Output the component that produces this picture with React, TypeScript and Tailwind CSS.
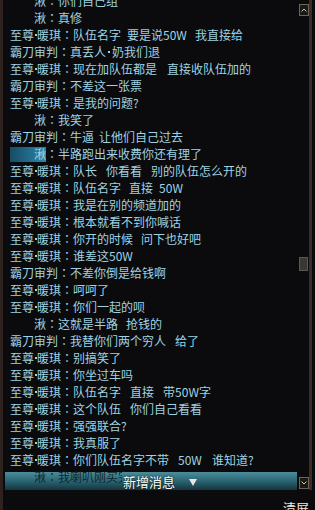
import React from "react";

type Seg = string | number;
type Row = { n: "Q" | "Z" | "B"; segs: Seg[]; hl?: boolean };

const DOT = -1;

const rows: Row[] = [
  { n: "Q", segs: ["你们自己组"] },
  { n: "Q", segs: ["真修"] },
  { n: "Z", segs: ["队伍名字", 6, "要是说50W", 8, "我直接给"] },
  { n: "B", segs: ["真丢人", DOT, "奶我们退"] },
  { n: "Z", segs: ["现在加队伍都是", 10, "直接收队伍加的"] },
  { n: "B", segs: ["不差这一张票"] },
  { n: "Z", segs: ["是我的问题?"] },
  { n: "Q", segs: ["我笑了"] },
  { n: "B", segs: ["牛逼", 5, "让他们自己过去"] },
  { n: "Q", segs: ["半路跑出来收费你还有理了"], hl: true },
  { n: "Z", segs: ["队长", 9, "你看看", 9, "别的队伍怎么开的"] },
  { n: "Z", segs: ["队伍名字", 8, "直接", 6, "50W"] },
  { n: "Z", segs: ["我是在别的频道加的"] },
  { n: "Z", segs: ["根本就看不到你喊话"] },
  { n: "Z", segs: ["你开的时候", 8, "问下也好吧"] },
  { n: "Z", segs: ["谁差这50W"] },
  { n: "B", segs: ["不差你倒是给钱啊"] },
  { n: "Z", segs: ["呵呵了"] },
  { n: "Z", segs: ["你们一起的呗"] },
  { n: "Q", segs: ["这就是半路", 8, "抢钱的"] },
  { n: "B", segs: ["我替你们两个穷人", 9, "给了"] },
  { n: "Z", segs: ["别搞笑了"] },
  { n: "Z", segs: ["你坐过车吗"] },
  { n: "Z", segs: ["队伍名字", 9, "直接", 9, "带50W字"] },
  { n: "Z", segs: ["这个队伍", 9, "你们自己看看"] },
  { n: "Z", segs: ["强强联合?"] },
  { n: "Z", segs: ["我真服了"] },
  { n: "Z", segs: ["你们队伍名字不带", 9, "50W", 10, "谁知道?"] },
];

const gapClass: Record<number, string> = {
  5: "w-[5px]",
  6: "w-[6px]",
  8: "w-[8px]",
  9: "w-[9px]",
  10: "w-[10px]",
};

function Dot({ w }: { w: "n" | "t" }) {
  return (
    <span
      className={
        (w === "n" ? "w-[3px]" : "w-[6px]") +
        " flex items-center justify-center self-stretch shrink-0"
      }
    >
      <span className="block w-[2px] h-[2px] bg-current" />
    </span>
  );
}

function Name({ n, hl }: { n: Row["n"]; hl?: boolean }) {
  if (n === "Z")
    return (
      <span className="flex shrink-0 h-[17px]">
        <span>至尊</span>
        <Dot w="n" />
        <span>暖琪</span>
      </span>
    );
  if (n === "B") return <span className="shrink-0">霸刀审判</span>;
  return (
    <span
      className={
        "shrink-0 w-[36px] text-right h-[17px] " +
        (hl
          ? "bg-linear-to-r from-[#174c66] to-[#2b88ad] bg-[length:100%_15px] bg-bottom bg-no-repeat"
          : "")
      }
    >
      湫
    </span>
  );
}

function Colon() {
  return (
    <span className="shrink-0 w-[12px] text-center font-['Noto_Sans_CJK_TC',sans-serif]">
      ：
    </span>
  );
}

function Segs({ segs }: { segs: Seg[] }) {
  return (
    <>
      {segs.map((s, i) =>
        typeof s === "string" ? (
          <span key={i} className="shrink-0">
            {s}
          </span>
        ) : s === DOT ? (
          <Dot key={i} w="t" />
        ) : (
          <span key={i} className={gapClass[s] + " shrink-0"} />
        )
      )}
    </>
  );
}

function ChatRow({ r, first }: { r: Row; first?: boolean }) {
  return (
    <div
      className={
        "flex items-center h-[17px] leading-[17px] whitespace-nowrap shrink-0" +
        (first ? " -mt-[8px]" : "")
      }
    >
      <Name n={r.n} hl={r.hl} />
      <Colon />
      <Segs segs={r.segs} />
    </div>
  );
}

function ArrowBtn({ up }: { up?: boolean }) {
  return (
    <div className="w-[10px] h-[12px] border border-[#6d6558] bg-[#1b1916] flex items-center justify-center shrink-0">
      <svg width="6" height="4" viewBox="0 0 6 4">
        <polyline
          points={up ? "0.5,3.5 3,1 5.5,3.5" : "0.5,0.5 3,3 5.5,0.5"}
          stroke="#cbc2b2"
          strokeWidth="1"
          fill="none"
        />
      </svg>
    </div>
  );
}

export default function App() {
  return (
    <div className="w-[315px] h-[510px] bg-[#0b0b0d] flex flex-col overflow-hidden text-[12px] text-[#9fd3e3] font-['Noto_Sans_CJK_SC',sans-serif]">
      <div className="flex h-[490px] shrink-0">
        <div className="w-[3px] bg-[#2d221d] shrink-0" />
        <div className="flex-1 flex flex-col overflow-hidden pl-[7px]">
          {rows.map((r, i) => (
            <ChatRow key={i} r={r} first={i === 0} />
          ))}
          <div className="relative -ml-[5px] pl-[5px] mt-[4px] h-[18px] shrink-0 flex items-start leading-[9px] whitespace-nowrap text-[#0d2632] bg-linear-to-b from-[#4c8d9b] via-[#2a6573] to-[#15363e]">
            <Name n="Q" />
            <Colon />
            <Segs segs={["我喇叭刚买完"]} />
            <div className="absolute left-[117px] top-0 h-[18px] pr-[40px] pl-[1px] pt-[2px] flex items-center gap-[14px] bg-linear-to-b from-[#4c8d9b] via-[#2a6573] to-[#15363e] text-white text-[13px] leading-[14px] [text-shadow:0_0_2px_#000]">
              <span>新增消息</span>
              <svg width="8" height="7" viewBox="0 0 8 7">
                <polygon points="0,0 8,0 4,7" fill="#e6e6e6" />
              </svg>
            </div>
          </div>
        </div>
        <div className="w-[12px] shrink-0 flex flex-col items-end pt-[4px] pb-[1px]">
          <ArrowBtn up />
          <div className="mt-[241px] w-[9px] h-[14px] mr-[1px] border border-[#5d5950] bg-[#3a3834] shrink-0" />
          <div className="flex-1" />
          <ArrowBtn />
        </div>
        <div className="w-[3px] bg-[#3c2e26] shrink-0" />
        <div className="w-[3px] shrink-0" />
      </div>
      <div className="flex h-[20px] shrink-0">
        <div className="w-[3px] bg-[#2d221d] shrink-0" />
        <div className="flex-1 flex justify-end pr-[6px] pt-[11px] overflow-hidden">
          <span className="text-[13px] leading-[14px] text-[#f2eadb]">清屏</span>
        </div>
      </div>
    </div>
  );
}
